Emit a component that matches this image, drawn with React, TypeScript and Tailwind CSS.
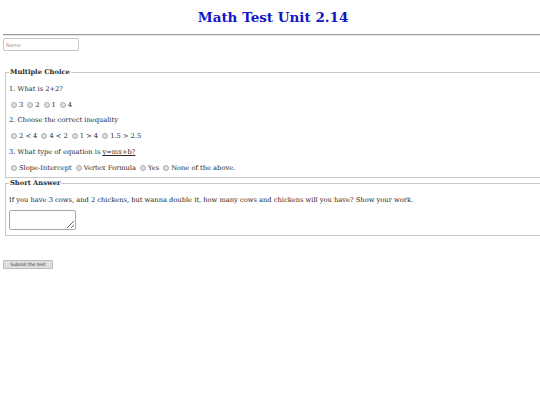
import React from 'react';

function Radio({ label }: { label: React.ReactNode }) {
    return (
        <label className="flex items-center mr-[2px]">
            <input
                type="radio"
                name="x"
                className="appearance-none w-[6px] h-[6px] rounded-full border border-[#adadad] bg-[#e0e0e0] ml-[2px] mr-[2px]"
            />
            <span>{label}</span>
        </label>
    );
}

export default function App() {
    const rows = [
        ['3', '2', '1', '4'],
        ['2 < 4', '4 < 2', '1 > 4', '1.5 > 2.5'],
        ['Slope-Intercept', 'Vertex Formula', 'Yes', 'None of the above.'],
    ];

    return (
        <div className="w-[540px] h-[405px] bg-white overflow-hidden font-['DejaVu_Serif',serif] text-[6.7px] text-[#2a2a2a]">
            <h1 className="text-center text-[13.5px] font-bold text-[#1515c8] pt-[9px] pl-[6px] leading-[16px]">
                Math Test Unit 2.14
            </h1>
            <div className="mt-[9px] ml-[3px] h-[2px] border-t border-t-[#9c9c9c] border-b border-b-[#e4e4e4]" />
            <input
                placeholder="Name"
                className="block mt-[2px] ml-[3px] w-[76px] h-[13px] border border-[#c4c4c4] rounded-[2px] px-[2px] text-[5px] font-['DejaVu_Sans',sans-serif] placeholder:text-[#999]"
            />

            <fieldset className="mt-[16px] ml-[5px] w-[545px] border border-[#c8c8c8] pl-[3px] pb-[4px]">
                <legend className="px-[1px] font-bold leading-[10px]">Multiple Choice</legend>
                <p className="mt-[7px] leading-[10px]">1. What is 2+2?</p>
                <div className="flex mt-[6px] leading-[10px]">
                    {rows[0].map((r) => (
                        <Radio key={r} label={r} />
                    ))}
                </div>
                <p className="mt-[5px] leading-[10px]">2. Choose the correct inequality</p>
                <div className="flex mt-[6px] leading-[10px]">
                    {rows[1].map((r) => (
                        <Radio key={r} label={r} />
                    ))}
                </div>
                <p className="mt-[6px] leading-[10px]">
                    3. What type of equation is <span className="underline">y=mx+b?</span>
                </p>
                <div className="flex mt-[6px] leading-[10px]">
                    {rows[2].map((r) => (
                        <Radio key={r} label={r} />
                    ))}
                </div>
            </fieldset>

            <fieldset className="ml-[5px] w-[545px] border border-[#c8c8c8] pl-[3px] pb-[5px]">
                <legend className="px-[1px] font-bold leading-[10px]">Short Answer</legend>
                <p className="mt-[7px] leading-[10px]">
                    If you have 3 cows, and 2 chickens, but wanna double it, how many cows and chickens will
                    you have? Show your work.
                </p>
                <textarea className="block mt-[5px] w-[67px] h-[20px] border border-[#a8a8a8] rounded-[2px]" />
            </fieldset>

            <button className="block mt-[24px] ml-[3px] w-[50px] h-[9px] bg-[#dedede] border border-[#bdbdbd] rounded-[1px] text-[4.5px] leading-[7px] text-[#333] font-['DejaVu_Sans',sans-serif]">
                Submit the test
            </button>
        </div>
    );
}
